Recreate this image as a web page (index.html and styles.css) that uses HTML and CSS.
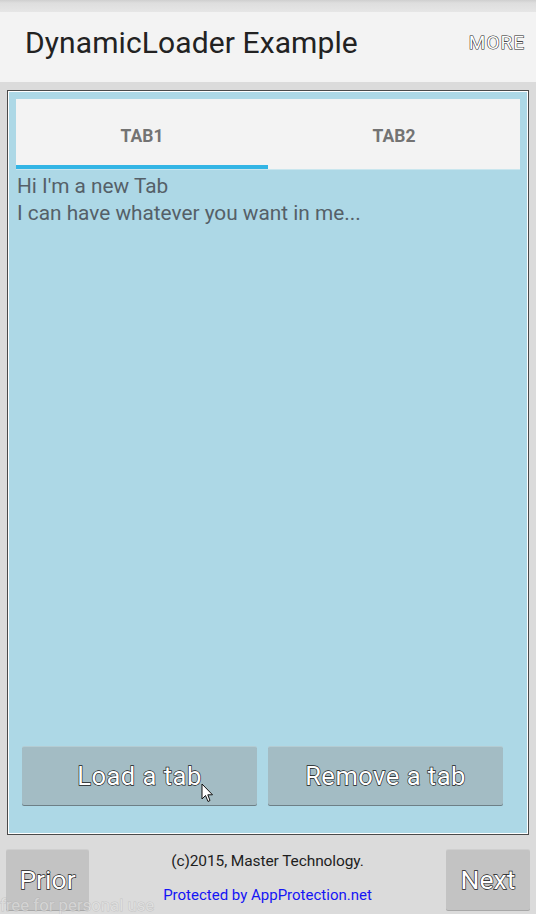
FILE: index.html
```html
<!DOCTYPE html>
<html>
<head>
<meta charset="utf-8">
<link rel="stylesheet" href="styles.css">
</head>
<body>
<div class="status"></div>
<header class="actionbar">
  <h1 class="title">DynamicLoader Example</h1>
  <span class="more outline">MORE</span>
</header>
<main class="main">
  <section class="panel">
    <nav class="tabs">
      <div class="tab active">TAB1</div>
      <div class="tab">TAB2</div>
    </nav>
    <div class="content">
      <p>Hi I'm a new Tab</p>
      <p>I can have whatever you want in me...</p>
    </div>
    <div class="actions">
      <button class="btn outline">Load a tab</button>
      <button class="btn outline">Remove a tab</button>
    </div>
    <svg class="cursor" width="13" height="21" viewBox="0 0 13 21"><path d="M1 1 L1 16 L4.5 12.5 L7 18.5 L9 17.5 L6.8 11.8 L11.5 11.8 Z" fill="#fff" stroke="#111" stroke-width="1"/></svg>
  </section>
</main>
<footer class="footer">
  <button class="navbtn outline">Prior</button>
  <div class="credits">
    <div class="copy">(c)2015, Master Technology.</div>
    <div class="link">Protected by AppProtection.net</div>
  </div>
  <button class="navbtn outline">Next</button>
  <div class="watermark">free for personal use</div>
</footer>
</body>
</html>
```
FILE: styles.css
```css
* { box-sizing: border-box; }
html, body { margin: 0; padding: 0; }
body {
  width: 536px;
  height: 914px;
  background: #dbdbdb;
  font-family: Roboto, "Noto Sans", sans-serif;
  overflow: hidden;
  position: relative;
}
.status {
  height: 12px;
  background: linear-gradient(#cfcfcf 0, #dedede 3px, #e6e6e6 12px);
}
.actionbar {
  height: 70px;
  background: #f3f3f3;
  display: flex;
  align-items: center;
  justify-content: space-between;
  padding: 0 11px 0 25px;
}
.title {
  margin: 0;
  font-weight: 400;
  font-size: 30px;
  color: #222;
  letter-spacing: 0.1px;
  position: relative;
  top: -5px;
}
.outline {
  color: #fff;
  -webkit-text-stroke: 1.3px #1a1a1a;
  paint-order: stroke fill;
}
.more {
  font-size: 19px;
  font-weight: 400;
  letter-spacing: 1px;
  -webkit-text-stroke: 1.1px #222;
  position: relative;
  top: -5px;
}
.main {
  padding: 8px 7px 0 7px;
}
.panel {
  position: relative;
  height: 745px;
  background: #add8e6;
  border: 1px solid #4a4a4a;
  box-shadow: inset -1px -1px 0 #fff, inset 1px 1px 0 #fff;
  padding: 8px 8px 0 8px;
  display: flex;
  flex-direction: column;
}
.tabs {
  height: 71px;
  display: flex;
  background: #f3f3f3;
  border-bottom: 1px solid #c9e6ee;
}
.tab {
  flex: 1;
  display: flex;
  align-items: center;
  justify-content: center;
  font-size: 17.5px;
  font-weight: 700;
  color: #737373;
  padding-top: 4px;
}
.tab.active {
  box-shadow: inset 0 -4px 0 #33b5e5;
}
.content {
  flex: 1;
  padding: 3px 0 0 1px;
  font-size: 20.8px;
  line-height: 27px;
  color: #556068;
}
.content p { margin: 0; }
.actions {
  display: flex;
  gap: 11px;
  padding: 0 17px 29px 6px;
}
.btn {
  flex: 1;
  height: 58px;
  border: 0;
  border-radius: 2px;
  background: #a3bcc4;
  box-shadow: 0 1px 0 #6d7f86, 0 -1px 0 #b4ccd3;
  font-family: Roboto, sans-serif;
  font-size: 25.5px;
  font-weight: 400;
  letter-spacing: 0.5px;
  padding: 0;
}
.cursor {
  position: absolute;
  left: 193px;
  top: 692px;
}
.footer {
  position: relative;
  display: flex;
  align-items: flex-start;
  justify-content: space-between;
  padding: 15px 6px 0 6px;
}
.navbtn {
  width: 83px;
  height: 60px;
  border: 0;
  border-radius: 2px;
  background: #c3c3c3;
  box-shadow: 0 -1px 0 #cfcfcf, 0 1px 0 #a8a8a8;
  font-family: Roboto, sans-serif;
  font-size: 26.5px;
  font-weight: 400;
  padding: 0 0 2px 0;
}
.navbtn:last-of-type { width: 84px; }
.credits {
  flex: 1;
  text-align: center;
  padding-top: 1px;
}
.copy {
  font-size: 15.5px;
  color: #1e1e1e;
  line-height: 20px;
  letter-spacing: -0.1px;
}
.link {
  margin-top: 14px;
  font-size: 15px;
  color: #1515f5;
  line-height: 20px;
}
.watermark {
  position: absolute;
  left: 0;
  top: 60px;
  font-size: 16.8px;
  line-height: 20px;
  color: rgba(255,255,255,0.4);
  -webkit-text-stroke: 1px rgba(170,170,170,0.45);
  paint-order: stroke fill;
  font-weight: 400;
}
```
